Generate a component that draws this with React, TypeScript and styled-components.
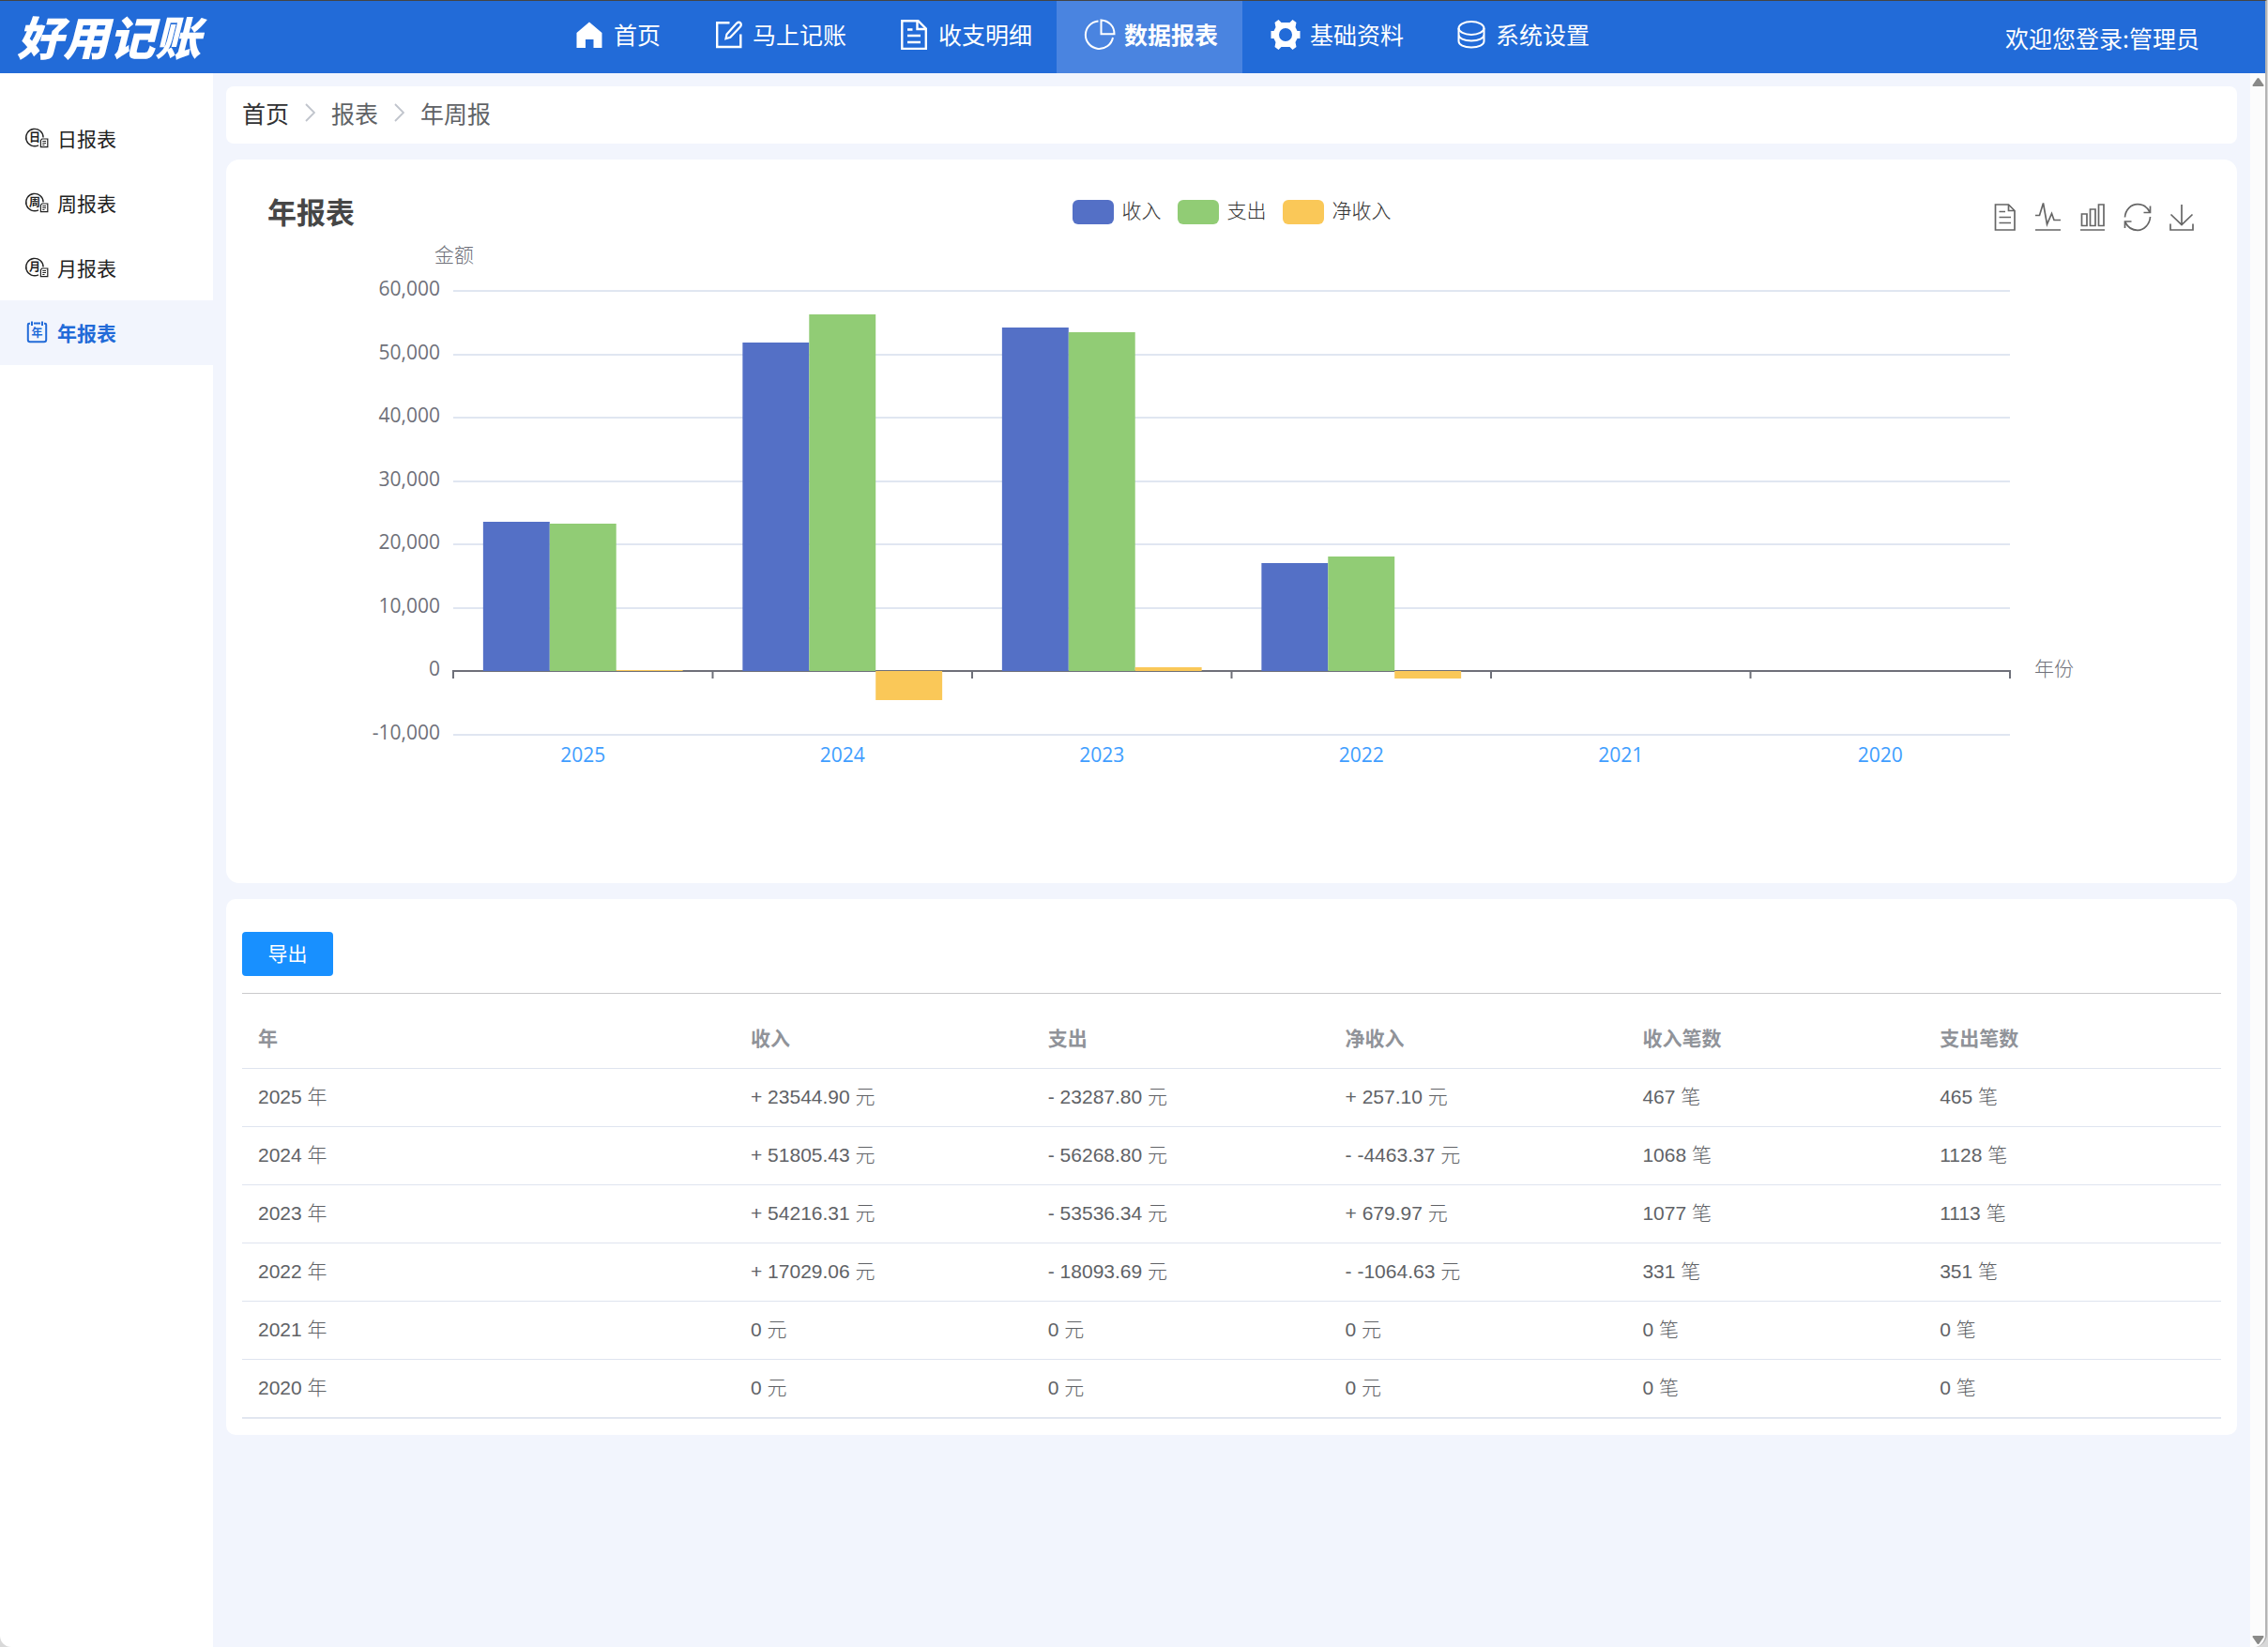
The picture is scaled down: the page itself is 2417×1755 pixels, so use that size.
import React from "react";
import styled, { createGlobalStyle, css } from "styled-components";

const cjk = `"Noto Sans CJK SC", sans-serif`;

const GlobalStyle = createGlobalStyle`
  * { box-sizing: border-box; }
  body {
    margin: 0;
    background: #d8d8d8;
    font-family: ${cjk};
    color: #303133;
  }
  button { font-family: inherit; }
`;

const Window = styled.div`
  display: flex;
  flex-direction: column;
  min-height: 100vh;
  margin-right: 1px;
  border-top: 1px solid #444;
  border-right: 2px solid #b4b4b4;
  border-radius: 0 0 14px 12px;
  background: #fff;
  overflow: hidden;
`;

/* ---------- header ---------- */

const Header = styled.header`
  display: grid;
  grid-template-columns: 582px auto 1fr;
  height: 77px;
  background: #226bd8;
  color: #fff;
`;

const Logo = styled.h1`
  margin: 0;
  padding-left: 18px;
  font-size: 49px;
  line-height: 74px;
  font-weight: 900;
  font-style: italic;
  white-space: nowrap;
`;

const Nav = styled.nav`
  display: flex;
`;

const NavLink = styled.a<{ $active?: boolean }>`
  display: flex;
  align-items: center;
  gap: 9px;
  padding: 0 26px 7px 29px;
  font-size: 25px;
  line-height: 36px;
  font-weight: ${(p) => (p.$active ? 700 : 400)};
  color: inherit;
  text-decoration: none;
  white-space: nowrap;
  background: ${(p) => (p.$active ? "#4a84e0" : "transparent")};
`;

const Welcome = styled.span`
  justify-self: end;
  align-self: center;
  padding-right: 70px;
  font-size: 25px;
  line-height: 36px;
`;

/* ---------- frame ---------- */

const Body = styled.div`
  flex: 1;
  display: flex;
`;

const Sidebar = styled.aside`
  flex: none;
  width: 227px;
  padding-top: 35px;
`;

const SideLink = styled.a<{ $active?: boolean }>`
  display: flex;
  align-items: center;
  gap: 9px;
  height: 69px;
  padding: 0 0 1px 26px;
  font-size: 21px;
  color: #222;
  text-decoration: none;
  ${(p) =>
    p.$active &&
    css`
      background: #f2f5fd;
      color: #226bd8;
      font-weight: 700;
    `}
`;

const Main = styled.main`
  flex: 1;
  min-width: 0;
  display: flex;
  flex-direction: column;
  gap: 17px;
  padding: 14px;
  background: #f2f5fd;
`;

const ScrollTrack = styled.div`
  flex: none;
  display: flex;
  flex-direction: column;
  justify-content: space-between;
  align-items: flex-end;
  width: 16px;
  padding: 5px 1px 3px;
  background: #fcfcfc;
`;

/* ---------- breadcrumb ---------- */

const Breadcrumb = styled.nav`
  display: flex;
  align-items: center;
  gap: 17px;
  height: 61px;
  padding: 0 17px 5px;
  border-radius: 8px;
  background: #fff;
  font-size: 25px;
  line-height: 36px;
  color: #606266;
`;

const CrumbLink = styled.a`
  color: #303133;
  text-decoration: none;
`;

/* ---------- chart card ---------- */

const ChartCard = styled.section`
  padding: 37px 0 0;
  border-radius: 14px;
  background: #fff;
`;

const ChartHeader = styled.div`
  display: grid;
  grid-template-columns: 1fr auto 1fr;
  align-items: center;
  height: 40px;
  padding: 0 44px;
`;

const ChartTitle = styled.h2`
  align-self: start;
  margin: 0;
  font-size: 31px;
  line-height: 36px;
  font-weight: 700;
  color: #464646;
`;

const Legend = styled.ul`
  display: flex;
  gap: 17px;
  margin: 0;
  padding: 0 0 2px;
  list-style: none;
`;

const LegendItem = styled.li`
  display: flex;
  gap: 9px;
  font-size: 21px;
  line-height: 20px;
  font-weight: 300;
  color: #333;
`;

const Swatch = styled.i<{ $color: string }>`
  width: 44px;
  height: 26px;
  border-radius: 6px;
  background: ${(p) => p.$color};
`;

const Toolbox = styled.div`
  justify-self: end;
  align-self: end;
  display: flex;
  gap: 17px;
`;

const ToolButton = styled.button`
  display: block;
  width: 30px;
  height: 32px;
  padding: 0;
  border: 0;
  background: none;
  color: #666;

  svg {
    display: block;
  }
`;

const PlotArea = styled.div`
  padding: 0 242px;
`;

const PlotSvg = styled.svg`
  display: block;
  width: 100%;
  height: 694px;
  overflow: visible;
  font-family: "Open Sans", ${cjk};
  font-size: 21px;
`;

/* ---------- table card ---------- */

const TableCard = styled.section`
  padding: 35px 17px 17px;
  border-radius: 10px;
  background: #fff;
`;

const TableTools = styled.div`
  padding-bottom: 18px;
  border-bottom: 1px solid #c9cacc;
`;

const ExportButton = styled.button`
  display: block;
  width: 97px;
  height: 47px;
  padding: 0 0 2px;
  border: 0;
  border-radius: 4px;
  background: #1890ff;
  color: #fff;
  font-size: 21px;
  line-height: 45px;
`;

const Table = styled.table`
  width: 100%;
  margin-top: 17px;
  border-collapse: separate;
  border-spacing: 0;
  border-bottom: 1px solid #e4e8f2;
  table-layout: fixed;
  font-family: "Liberation Sans", ${cjk};
  font-size: 21px;
  line-height: 30px;
  text-align: left;

  th,
  td {
    height: 62px;
    padding: 0 17px 1px;
    border-bottom: 1px solid #dfe4ef;
  }

  th {
    height: 63px;
    font-weight: 700;
    color: #909399;
  }

  th:first-child {
    width: 525px;
  }

  td {
    font-weight: 300;
    color: #606266;
  }
`;

/* ---------- icons ---------- */

const NavIcon = ({ children }: { children: React.ReactNode }) => (
  <svg width="34" height="34" viewBox="0 0 34 34" fill="none" stroke="currentColor" strokeWidth="2.4">
    {children}
  </svg>
);

const HomeIcon = () => (
  <NavIcon>
    <path d="M17 4.500 30.500 16V32H21.500V23H13V32H3.500V16Z" fill="currentColor" stroke="none" />
  </NavIcon>
);

const EditIcon = () => (
  <NavIcon>
    <path d="M18.500 5.300H5.200V31H30.300V17.500" />
    <path d="M14.500 22.200 15.500 17.600 26 5.800Q28.500 3.800 30.300 5.600 31.500 7.500 29.900 9.600L19.300 20.800Z" strokeWidth="2.200" />
  </NavIcon>
);

const DocIcon = () => (
  <NavIcon>
    <path d="M4.300 3.200H21.500L29.800 11.500V33H4.300Z" />
    <path d="M20.500 4V12H29M10 12.500H15.500M10 19H24M10 26H24" />
  </NavIcon>
);

const PieIcon = () => (
  <NavIcon>
    <path d="M15.500 3.600A14.700 14.700 0 1 0 31 21" strokeWidth="2" />
    <path d="M18.500 2.400A14.500 14.500 0 0 1 32.500 17.200H18.500Z" strokeWidth="2" />
  </NavIcon>
);

const GearIcon = () => (
  <NavIcon>
    <path
      fillRule="evenodd"
      stroke="none"
      fill="currentColor"
      d="M9.500 2 12.500 5H21.500L24.500 2 28.500 5 27.500 10 29.500 14H32.500V22H29.500L27.500 26 28.500 31 24.500 34 21.500 31H12.500L9.500 34 5.500 31 6.500 26 4.500 22H1.500V14H4.500L6.500 10 5.500 5ZM17 11A7 7 0 1 0 17 25 7 7 0 1 0 17 11Z"
    />
  </NavIcon>
);

const DatabaseIcon = () => (
  <NavIcon>
    <ellipse cx="17" cy="11" rx="13.500" ry="7" strokeWidth="2" />
    <path d="M3.500 11V18C3.500 21.500 9 24.500 17 24.500S30.500 21.500 30.500 18V11M3.500 18V25C3.500 28.500 9 31.500 17 31.500S30.500 28.500 30.500 25V18" strokeWidth="2" />
  </NavIcon>
);

const IconChar = styled.text`
  font-size: 12px;
  font-weight: 700;
  text-anchor: middle;
  fill: currentColor;
  stroke: none;
`;

const PeriodIcon = ({ char }: { char: string }) => (
  <svg width="26" height="26" viewBox="0 0 26 26" fill="none" stroke="currentColor" strokeWidth="1.400">
    <path d="M20.100 12.500A9.200 9.200 0 1 0 15 20.800" />
    <path d="M18.800 14H24.800V22.700H17.400V15.400Z" strokeWidth="1.200" />
    <path d="M19.300 16.500H23M19.300 18.500H23M19.300 20.500H21.500" strokeWidth="1" />
    <IconChar x="11" y="17">{char}</IconChar>
  </svg>
);

const YearIcon = () => (
  <svg width="26" height="26" viewBox="0 0 26 26" fill="none" stroke="currentColor" strokeWidth="2">
    <path d="M6 3.800H5Q3.800 3.800 3.800 5V21Q3.800 23.200 6 23.200H21Q23.200 23.200 23.200 21V5Q23.200 3.800 22 3.800H21" />
    <path d="M8 1.500V6M19 1.500V6M10 3.500H17" />
    <IconChar x="13.500" y="18">年</IconChar>
  </svg>
);

const ToolIcon = ({ d }: { d: string }) => (
  <svg width="30" height="32" viewBox="0 0 30 32" fill="none" stroke="currentColor" strokeWidth="1.700">
    <path d={d} />
  </svg>
);

const ScrollArrow = ({ down }: { down?: boolean }) => (
  <svg width="13" height="9" viewBox="0 0 13 9" fill="#8a8a88">
    <path d={down ? "M1 0H12Q13 1 12 2L7.500 8.500Q6.500 9.500 5.500 8.500L1 2Q0 1 1 0Z" : "M1 9H12Q13 8 12 7L7.500 .5Q6.500 -.5 5.500 .5L1 7Q0 8 1 9Z"} />
  </svg>
);

/* ---------- data ---------- */

const navItems = [
  { label: "首页", icon: <HomeIcon /> },
  { label: "马上记账", icon: <EditIcon /> },
  { label: "收支明细", icon: <DocIcon /> },
  { label: "数据报表", icon: <PieIcon />, active: true },
  { label: "基础资料", icon: <GearIcon /> },
  { label: "系统设置", icon: <DatabaseIcon /> },
];

const sideItems = [
  { label: "日报表", icon: <PeriodIcon char="日" /> },
  { label: "周报表", icon: <PeriodIcon char="周" /> },
  { label: "月报表", icon: <PeriodIcon char="月" /> },
  { label: "年报表", icon: <YearIcon />, active: true },
];

const tools = [
  { label: "数据视图", d: "M4.500 3H18.500L25 9.500V30H4.500ZM18.500 3V9.500H25M8.500 10.500H15M8.500 16.500H21M8.500 22.500H21" },
  { label: "切换为折线图", d: "M0 14.500H4.500L8.500 1.500 12.500 24 17.500 12.500 20 19.500H27M0 30H27" },
  { label: "切换为柱状图", d: "M2.500 13H8V25.500H2.500ZM11.500 8H17V25.500H11.500ZM20.500 3H26V25.500H20.500ZM1 30H27" },
  { label: "还原", d: "M1.500 16.500C2 8.500 8 2.700 15 2.700 21 2.700 25.500 6 28 11M28.500 4.500V11.500H21.500M28.500 16C28 24 22 30.300 15 30.300 9 30.300 4.500 27 2 22M1.500 28V21H8.500" },
  { label: "保存为图片", d: "M15 3V24.500M3.500 13.500 15 24.500 26.500 13.500M3 23.500V30H27V23.500" },
];

const series = [
  { name: "收入", color: "#5470c6" },
  { name: "支出", color: "#91cc75" },
  { name: "净收入", color: "#fac858" },
];

type Year = { year: number; income: number; expense: number; net: number; incomeCount: number; expenseCount: number };

const years: Year[] = [
  { year: 2025, income: 23544.9, expense: 23287.8, net: 257.1, incomeCount: 467, expenseCount: 465 },
  { year: 2024, income: 51805.43, expense: 56268.8, net: -4463.37, incomeCount: 1068, expenseCount: 1128 },
  { year: 2023, income: 54216.31, expense: 53536.34, net: 679.97, incomeCount: 1077, expenseCount: 1113 },
  { year: 2022, income: 17029.06, expense: 18093.69, net: -1064.63, incomeCount: 331, expenseCount: 351 },
  { year: 2021, income: 0, expense: 0, net: 0, incomeCount: 0, expenseCount: 0 },
  { year: 2020, income: 0, expense: 0, net: 0, incomeCount: 0, expenseCount: 0 },
];

const money = (value: number, sign: string) => (value === 0 ? "0 元" : `${sign} ${value.toFixed(2)} 元`);

/* ---------- chart ---------- */

const TOP = 63;
const BOTTOM = 536;
const MAX = 60000;
const MIN = -10000;
const yOf = (value: number) => Math.round(TOP + ((MAX - value) / (MAX - MIN)) * (BOTTOM - TOP));
const zero = yOf(0);
const ticks = [60000, 50000, 40000, 30000, 20000, 10000, 0, -10000];
const slot = 100 / years.length;
const barWidth = slot * 0.2565;
const barInset = (slot - barWidth * 3) / 2;

const BarChart = () => (
  <PlotSvg role="img" aria-label="年报表">
    {ticks.map((t) => (
      <React.Fragment key={t}>
        <text x="-14" y={yOf(t) + 5} textAnchor="end" fill="#6e7079">
          {t.toLocaleString("en-US")}
        </text>
        {t !== 0 && <rect x="0" y={yOf(t) - 1} width="100%" height="2" fill="#e0e6f1" />}
      </React.Fragment>
    ))}
    <rect x="-1" y={zero - 1} width="100%" height="2" fill="#6e7079" />
    {[...years.keys(), years.length].map((i) => (
      <line key={i} x1={`${i * slot}%`} x2={`${i * slot}%`} y1={zero - 1} y2={zero + 8} stroke="#6e7079" strokeWidth="2" />
    ))}
    {years.map((row, i) =>
      [row.income, row.expense, row.net].map((value, s) => (
        <rect
          key={`${row.year}-${s}`}
          x={`${i * slot + barInset + s * barWidth}%`}
          y={Math.min(yOf(value), zero)}
          width={`${barWidth}%`}
          height={Math.abs(yOf(value) - zero)}
          fill={series[s].color}
        />
      ))
    )}
    {years.map((row, i) => (
      <text key={row.year} x={`${(i + 0.5) * slot}%`} y={BOTTOM + 29} textAnchor="middle" fill="#409eff">
        {row.year}
      </text>
    ))}
    <text x="1" y="32" textAnchor="middle" fill="#6e7079" fontWeight="300">金额</text>
    <text x="100%" dx="26" y={zero + 5} fill="#6e7079" fontWeight="300">年份</text>
  </PlotSvg>
);

const Chevron = () => (
  <svg width="11" height="20" viewBox="0 0 11 20" fill="none" stroke="#c0c4cc" strokeWidth="1.800">
    <path d="M1 1 10 10 1 19" />
  </svg>
);

export default function App() {
  return (
    <>
      <GlobalStyle />
      <Window>
        <Header>
          <Logo>好用记账</Logo>
          <Nav>
            {navItems.map((item) => (
              <NavLink key={item.label} href="#" $active={item.active}>
                {item.icon}
                {item.label}
              </NavLink>
            ))}
          </Nav>
          <Welcome>欢迎您登录:管理员</Welcome>
        </Header>
        <Body>
          <Sidebar>
            {sideItems.map((item) => (
              <SideLink key={item.label} href="#" $active={item.active}>
                {item.icon}
                {item.label}
              </SideLink>
            ))}
          </Sidebar>
          <Main>
            <Breadcrumb>
              <CrumbLink href="#">首页</CrumbLink>
              <Chevron />
              <span>报表</span>
              <Chevron />
              <span>年周报</span>
            </Breadcrumb>
            <ChartCard>
              <ChartHeader>
                <ChartTitle>年报表</ChartTitle>
                <Legend>
                  {series.map((s) => (
                    <LegendItem key={s.name}>
                      <Swatch $color={s.color} />
                      {s.name}
                    </LegendItem>
                  ))}
                </Legend>
                <Toolbox>
                  {tools.map((tool) => (
                    <ToolButton key={tool.label} type="button" aria-label={tool.label}>
                      <ToolIcon d={tool.d} />
                    </ToolButton>
                  ))}
                </Toolbox>
              </ChartHeader>
              <PlotArea>
                <BarChart />
              </PlotArea>
            </ChartCard>
            <TableCard>
              <TableTools>
                <ExportButton type="button">导出</ExportButton>
              </TableTools>
              <Table>
                <thead>
                  <tr>
                    {["年", "收入", "支出", "净收入", "收入笔数", "支出笔数"].map((h) => (
                      <th key={h} scope="col">{h}</th>
                    ))}
                  </tr>
                </thead>
                <tbody>
                  {years.map((row) => (
                    <tr key={row.year}>
                      <td>{row.year} 年</td>
                      <td>{money(row.income, "+")}</td>
                      <td>{money(row.expense, "-")}</td>
                      <td>{money(row.net, row.net < 0 ? "-" : "+")}</td>
                      <td>{row.incomeCount} 笔</td>
                      <td>{row.expenseCount} 笔</td>
                    </tr>
                  ))}
                </tbody>
              </Table>
            </TableCard>
          </Main>
          <ScrollTrack>
            <ScrollArrow />
            <ScrollArrow down />
          </ScrollTrack>
        </Body>
      </Window>
    </>
  );
}
